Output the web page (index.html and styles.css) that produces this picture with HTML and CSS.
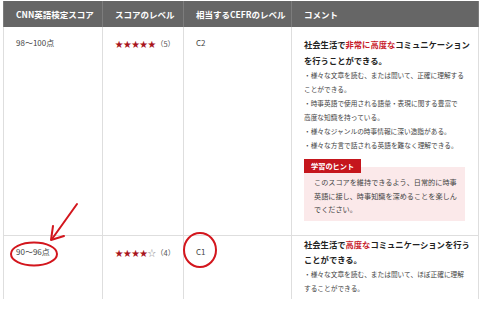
FILE: index.html
```html
<!DOCTYPE html>
<html lang="ja">
<head>
<meta charset="utf-8">
<title>CNN英語検定スコア</title>
<link rel="stylesheet" href="styles.css">
</head>
<body>
<table class="score-table">
  <colgroup>
    <col class="col-score">
    <col class="col-level">
    <col class="col-cefr">
    <col class="col-comment">
  </colgroup>
  <thead>
    <tr>
      <th>CNN英語検定スコア</th>
      <th>スコアのレベル</th>
      <th>相当するCEFRのレベル</th>
      <th>コメント</th>
    </tr>
  </thead>
  <tbody>
    <tr>
      <td class="score">98〜100点</td>
      <td class="level"><span class="stars">★★★★★</span><span class="num">（5）</span></td>
      <td class="cefr">C2</td>
      <td class="comment">
        <p class="lead">社会生活で<em>非常に高度な</em>コミュニケーション<br>を行うことができる。</p>
        <p class="points">・様々な文章を読む、または聞いて、正確に理解する<br>ことができる。<br>・時事英語で使用される語彙・表現に関する豊富で<br>高度な知識を持っている。<br>・様々なジャンルの時事情報に深い造詣がある。<br>・様々な方言で話される英語を難なく理解できる。</p>
        <div class="hint">
          <span class="hint-label">学習のヒント</span>
          <p class="hint-body">このスコアを維持できるよう、日常的に時事<br>英語に接し、時事知識を深めることを楽しん<br>でください。</p>
        </div>
      </td>
    </tr>
    <tr class="row-cut">
      <td class="score">90〜96点</td>
      <td class="level"><span class="stars">★★★★<span class="off">☆</span></span><span class="num">（4）</span></td>
      <td class="cefr">C1</td>
      <td class="comment comment-tight">
        <p class="lead">社会生活で<em>高度な</em>コミュニケーションを行う<br>ことができる。</p>
        <p class="points">・様々な文章を読む、または聞いて、ほぼ正確に理解<br>することができる。</p>
      </td>
    </tr>
  </tbody>
</table>
<svg class="marks" width="480" height="309" viewBox="0 0 480 309" aria-hidden="true">
  <g fill="none" stroke="#d3161d" stroke-width="2" stroke-linecap="round" stroke-linejoin="round">
    <line x1="77" y1="204" x2="52" y2="239"/>
    <polyline points="53,226 51,240 64,236"/>
    <ellipse cx="34" cy="254" rx="23" ry="11.5"/>
    <ellipse cx="200" cy="250" rx="16" ry="17"/>
  </g>
</svg>
</body>
</html>
```

FILE: styles.css
```css
html, body {
  margin: 0;
  padding: 0;
}
body {
  position: relative;
  width: 480px;
  height: 309px;
  overflow: hidden;
  background: #fff;
  font-family: "Noto Sans CJK JP", "Noto Sans", sans-serif;
  color: #333;
}
.score-table {
  border-collapse: collapse;
  table-layout: fixed;
  width: 475px;
  margin: 1px 0 0 3px;
}
.col-score { width: 99px; }
.col-level { width: 81px; }
.col-cefr { width: 108px; }
.col-comment { width: 187px; }

.score-table th {
  background: #666;
  color: #fff;
  font-size: 8.5px;
  font-weight: bold;
  text-align: left;
  height: 26px;
  padding: 0 0 0 12px;
  border-left: 1px solid #7c7c7c;
  border-right: 1px solid #7c7c7c;
  white-space: nowrap;
}
.score-table td {
  vertical-align: top;
  padding: 8px 0 0 12px;
  border-left: 1px solid #dedede;
  border-right: 1px solid #dedede;
  font-size: 8px;
  line-height: 16px;
  color: #444;
}
.score-table tbody tr:first-child td {
  border-bottom: 1px solid #dedede;
}
.stars {
  color: #a9151c;
  font-size: 8.2px;
}
.stars .off {
  color: #8a8a8a;
}
.num {
  color: #555;
  font-size: 7.5px;
}
.cefr {
  color: #222;
}
.score-table td.comment {
  padding: 9px 6px 14px 12px;
  white-space: nowrap;
}
.score-table td.comment-tight {
  padding-top: 1px;
  padding-bottom: 4px;
}
.lead {
  margin: 0;
  font-size: 8.3px;
  line-height: 16px;
  font-weight: bold;
  color: #222;
}
.lead em {
  font-style: normal;
  color: #c8202a;
}
.comment-tight .lead {
  line-height: 15px;
}
.points {
  margin: 0;
  font-size: 6.7px;
  line-height: 14px;
  color: #444;
}
.hint {
  margin-top: 7px;
  width: 161px;
}
.hint-label {
  position: relative;
  display: block;
  width: max-content;
  background: #c5161d;
  color: #fff;
  font-size: 7.2px;
  font-weight: bold;
  line-height: 14px;
  padding: 0 7px;
  margin-bottom: -6px;
}
.hint-body {
  margin: 0;
  background: #fbe9ea;
  padding: 9px 0 4px 10px;
  font-size: 7.15px;
  line-height: 13.5px;
  color: #444;
}
.marks {
  position: absolute;
  left: 0;
  top: 0;
  pointer-events: none;
}
```
